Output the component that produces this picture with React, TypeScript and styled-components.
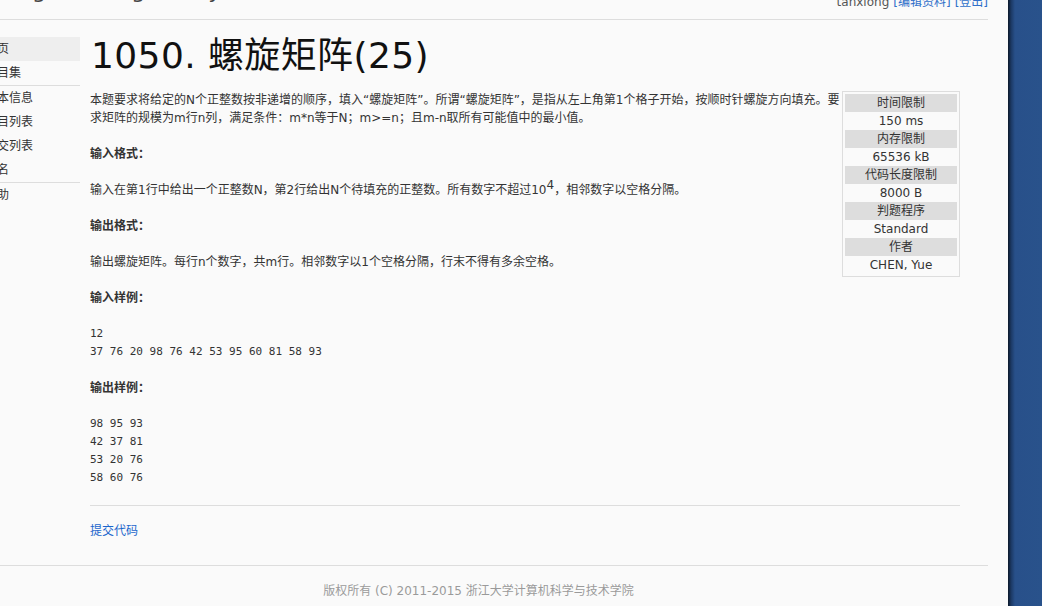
import React from "react";
import styled, { createGlobalStyle } from "styled-components";

const GlobalStyle = createGlobalStyle`
  html, body { margin: 0; padding: 0; }
  body {
    width: 1042px;
    height: 606px;
    overflow: hidden;
    font-family: "DejaVu Sans", "Noto Sans CJK SC", sans-serif;
  }
`;

const Screen = styled.div`
  display: flex;
  width: 1042px;
  height: 606px;
`;

const Browser = styled.div`
  width: 1008px;
  height: 606px;
  overflow: hidden;
  background: #fafafa;
  flex: none;
`;

const Desktop = styled.div`
  flex: 1;
  background: linear-gradient(to right, #0c1829 0px, #1b3863 3px, #28508a 7px, #29528b 100%);
`;

const Page = styled.div`
  width: 1019px;
  margin-left: -31px;
`;

const Header = styled.header`
  height: 40px;
  margin-top: -21px;
  border-bottom: 1px solid #dddddd;
  display: flex;
  justify-content: space-between;
  align-items: flex-start;
`;

const Logo = styled.div`
  margin: -1px 0 0 28px;
  font-size: 22px;
  line-height: 26px;
  color: #444;
  white-space: nowrap;
`;

const UserBar = styled.div`
  margin-top: 14px;
  font-size: 12px;
  line-height: 18px;
  color: #555;
  white-space: nowrap;
`;

const HeadLink = styled.a`
  color: #2f6fc9;
  text-decoration: none;
  margin-left: 4px;
`;

const Body = styled.div`
  display: flex;
  align-items: flex-start;
  padding-top: 16px;
`;

const Sidebar = styled.nav`
  width: 111px;
  flex: none;
  padding-top: 1px;
`;

const NavItem = styled.div<{ $active?: boolean }>`
  height: 24px;
  line-height: 24px;
  padding-left: 16px;
  font-size: 12px;
  color: #333;
  white-space: nowrap;
  background: ${(p) => (p.$active ? "#eeeeee" : "transparent")};
`;

const NavDivider = styled.div`
  height: 1px;
  background: #dddddd;
`;

const Main = styled.main`
  width: 870px;
  margin-left: 10px;
  flex: none;
`;

const Title = styled.h1`
  margin: 0 0 15px 1px;
  font-size: 36px;
  line-height: 40px;
  letter-spacing: 0.4px;
  font-weight: normal;
  color: #111;
  white-space: nowrap;
`;

const Content = styled.div`
  display: flow-root;
  font-size: 12px;
  line-height: 18px;
  color: #333;
`;

const InfoBox = styled.div`
  float: right;
  width: 112px;
  padding: 2px;
  border: 1px solid #dddddd;
`;

const InfoHead = styled.div`
  height: 18px;
  line-height: 18px;
  text-align: center;
  background: #dddddd;
  color: #333;
`;

const InfoValue = styled.div`
  height: 18px;
  line-height: 18px;
  text-align: center;
  color: #333;
`;

const Paragraph = styled.p`
  margin: 0 0 18px;
`;

const SectionTitle = styled.p`
  margin: 0 0 18px;
  font-weight: bold;
`;

const Sup = styled.sup`
  font-size: 12px;
  line-height: 0;
  vertical-align: 5px;
`;

const Sample = styled.pre`
  margin: 0 0 18px;
  font-family: "DejaVu Sans Mono", monospace;
  font-size: 11px;
  line-height: 18px;
  color: #333;
`;

const Rule = styled.hr`
  margin: 0;
  border: 0;
  border-top: 1px solid #dddddd;
`;

const Actions = styled.div`
  margin-top: 16px;
  font-size: 12px;
  line-height: 18px;
`;

const Link = styled.a`
  color: #1a66cc;
  text-decoration: none;
`;

const Footer = styled.footer`
  margin-top: 25px;
  border-top: 1px solid #dddddd;
  padding-top: 16px;
  text-align: center;
  font-size: 12px;
  line-height: 18px;
  color: #9a9a9a;
`;

const limits = [
  { label: "时间限制", value: "150 ms" },
  { label: "内存限制", value: "65536 kB" },
  { label: "代码长度限制", value: "8000 B" },
  { label: "判题程序", value: "Standard" },
  { label: "作者", value: "CHEN, Yue" },
];

export default function App() {
  return (
    <Screen>
      <GlobalStyle />
      <Browser>
        <Page>
          <Header>
            <Logo>Programming Ability Test</Logo>
            <UserBar>
              tanxiong
              <HeadLink href="#">[编辑资料]</HeadLink>
              <HeadLink href="#">[登出]</HeadLink>
            </UserBar>
          </Header>
          <Body>
            <Sidebar>
              <NavItem $active>首页</NavItem>
              <NavItem>题目集</NavItem>
              <NavDivider />
              <NavItem>基本信息</NavItem>
              <NavItem>题目列表</NavItem>
              <NavItem>提交列表</NavItem>
              <NavItem>排名</NavItem>
              <NavDivider />
              <NavItem>帮助</NavItem>
            </Sidebar>
            <Main>
              <Title>1050. 螺旋矩阵(25)</Title>
              <Content>
                <InfoBox>
                  {limits.map((l) => (
                    <React.Fragment key={l.label}>
                      <InfoHead>{l.label}</InfoHead>
                      <InfoValue>{l.value}</InfoValue>
                    </React.Fragment>
                  ))}
                </InfoBox>
                <Paragraph>
                  本题要求将给定的N个正整数按非递增的顺序，填入“螺旋矩阵”。所谓“螺旋矩阵”，是指从左上角第1个格子开始，按顺时针螺旋方向填充。要求矩阵的规模为m行n列，满足条件：m*n等于N；m&gt;=n；且m-n取所有可能值中的最小值。
                </Paragraph>
                <SectionTitle>输入格式：</SectionTitle>
                <Paragraph>
                  输入在第1行中给出一个正整数N，第2行给出N个待填充的正整数。所有数字不超过10<Sup>4</Sup>，相邻数字以空格分隔。
                </Paragraph>
                <SectionTitle>输出格式：</SectionTitle>
                <Paragraph>
                  输出螺旋矩阵。每行n个数字，共m行。相邻数字以1个空格分隔，行末不得有多余空格。
                </Paragraph>
                <SectionTitle>输入样例：</SectionTitle>
                <Sample>{"12\n37 76 20 98 76 42 53 95 60 81 58 93"}</Sample>
                <SectionTitle>输出样例：</SectionTitle>
                <Sample>{"98 95 93\n42 37 81\n53 20 76\n58 60 76"}</Sample>
              </Content>
              <Rule />
              <Actions>
                <Link href="#">提交代码</Link>
              </Actions>
            </Main>
          </Body>
          <Footer>版权所有 (C) 2011-2015 浙江大学计算机科学与技术学院</Footer>
        </Page>
      </Browser>
      <Desktop />
    </Screen>
  );
}
